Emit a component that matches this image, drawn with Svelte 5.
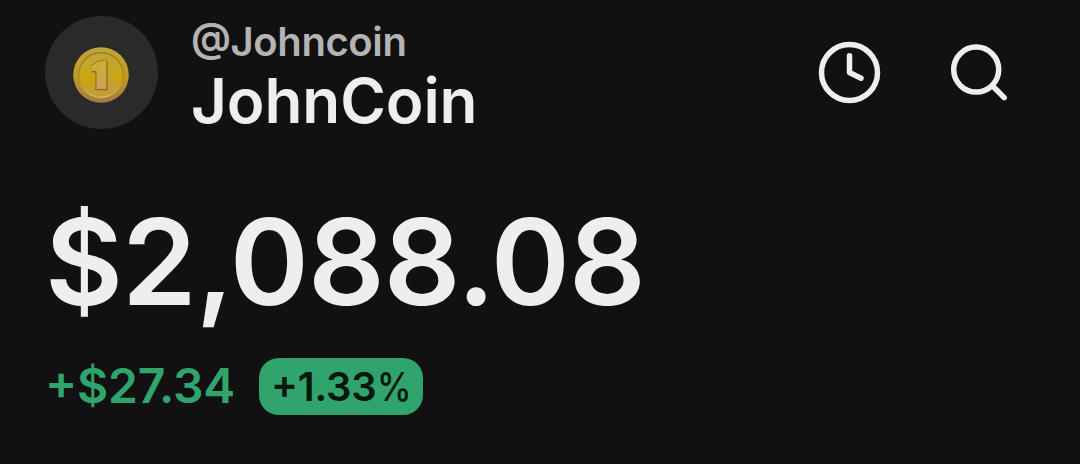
<script>
  const account = {
    handle: '@Johncoin',
    name: 'JohnCoin',
    balance: '$2,088.08',
    gain: '+$27.34',
    percent: '+1.33'
  };
</script>

<main class="wallet">
  <header class="top-bar">
    <div class="avatar">
      <svg width="56" height="56" viewBox="0 0 56 56" aria-hidden="true">
        <defs>
          <linearGradient id="rim" x1="0" y1="0" x2="0" y2="1">
            <stop offset="0" stop-color="#c0a63c" />
            <stop offset="0.5" stop-color="#c29a1c" />
            <stop offset="1" stop-color="#a67a42" />
          </linearGradient>
          <linearGradient id="face" x1="0" y1="0" x2="0" y2="1">
            <stop offset="0" stop-color="#bea53a" />
            <stop offset="0.6" stop-color="#cda60c" />
            <stop offset="1" stop-color="#c39a40" />
          </linearGradient>
          <linearGradient id="digit" x1="0" y1="0" x2="0" y2="1">
            <stop offset="0" stop-color="#d0b02c" />
            <stop offset="1" stop-color="#c9a258" />
          </linearGradient>
          <linearGradient id="groove" x1="0" y1="0" x2="0" y2="1">
            <stop offset="0" stop-color="#94742c" />
            <stop offset="0.6" stop-color="#b08a28" />
            <stop offset="1" stop-color="#dcbc5c" />
          </linearGradient>
        </defs>
        <circle cx="28" cy="28" r="27.8" fill="url(#rim)" />
        <circle cx="28" cy="28" r="22.3" fill="url(#face)" stroke="url(#groove)" stroke-width="1.3" />
        <path d="M34 24 L45.5 38 A20 20 0 0 1 34 47.5 Z" fill="#c69f44" opacity="0.6" />
        <!-- shadow, body and lit top edge of the embossed digit -->
        <path d="M18.2 19.5 L24 15.5 L34.6 13.5 V43.2 H22.4 V25.5 H18.8 Z" fill="#8d6922" />
        <path d="M18 18.5 L24 14.5 L33.3 12.8 V42 H23.5 V24 H18.7 Z" fill="url(#digit)" />
        <path d="M18 18.5 L24 14.5 L33.3 12.8" fill="none" stroke="#8f6f22" stroke-width="0.9" />
      </svg>
    </div>
    <div class="identity">
      <div class="handle">{account.handle}</div>
      <div class="name">{account.name}</div>
    </div>
    <nav class="actions">
      <button type="button" aria-label="History">
        <svg width="64" height="64" viewBox="0 0 64 64">
          <circle cx="32.5" cy="31.5" r="28" />
          <path d="M32.5 14.7 V31.5 L44 37.2" />
        </svg>
      </button>
      <button type="button" aria-label="Search">
        <svg width="64" height="64" viewBox="0 0 64 64">
          <circle cx="29.2" cy="28.6" r="22.5" />
          <path d="M45.4 44.8 L57.2 56.6" />
        </svg>
      </button>
    </nav>
  </header>

  <div class="balance">{account.balance}</div>

  <div class="change">
    <span class="gain">{account.gain}</span>
    <span class="badge">{account.percent}<span class="unit">%</span></span>
  </div>
</main>

<style>
  :global(body) {
    background: #111111;
  }

  .wallet {
    box-sizing: border-box;
    height: 464px;
    padding: 16px 69px 0 45px;
    overflow: hidden;
    background: #111111;
    color: #eeeeee;
    font-family: Inter, sans-serif;
    font-weight: 600;
    white-space: nowrap;
  }

  .top-bar {
    display: flex;
    height: 113px;
  }

  .avatar {
    display: flex;
    align-items: center;
    justify-content: center;
    width: 113px;
    height: 113px;
    border-radius: 50%;
    background: #2a2a2a;
  }

  .avatar svg {
    margin: 5px 1px 0 0;
  }

  .identity {
    margin-left: 33px;
  }

  .handle {
    height: 50px;
    color: #b4b4b4;
    font-size: 40px;
    font-feature-settings: 'case';
    letter-spacing: -0.4px;
    line-height: 52px;
  }

  .name {
    font-size: 62px;
    letter-spacing: -0.1px;
    line-height: 70px;
  }

  .actions {
    display: flex;
    gap: 66px;
    margin: 25px 0 0 auto;
  }

  .actions button {
    width: 64px;
    height: 64px;
    padding: 0;
    border: none;
    background: none;
  }

  .actions svg {
    display: block;
    fill: none;
    stroke: #eeeeee;
    stroke-width: 5.5;
    stroke-linecap: round;
    stroke-linejoin: round;
  }

  .balance {
    height: 150px;
    margin-top: 58px;
    font-size: 120px;
    letter-spacing: -1px;
    line-height: 150px;
  }

  .change {
    display: flex;
    align-items: center;
    gap: 24px;
    height: 57px;
    margin-top: 21px;
    font-size: 48px;
    line-height: 57px;
    font-feature-settings: 'case';
  }

  .gain {
    padding-bottom: 2px;
    color: #30a46c;
    letter-spacing: -0.25px;
  }

  .badge {
    box-sizing: border-box;
    width: 164px;
    height: 57px;
    padding-left: 12px;
    border-radius: 20px;
    background: #30a46c;
    color: #06170e;
    font-size: 40px;
    letter-spacing: -0.2px;
  }

  .unit {
    display: inline-block;
    margin-left: 1px;
    font-weight: 500;
    transform: scaleX(0.87);
    transform-origin: left;
  }
</style>
